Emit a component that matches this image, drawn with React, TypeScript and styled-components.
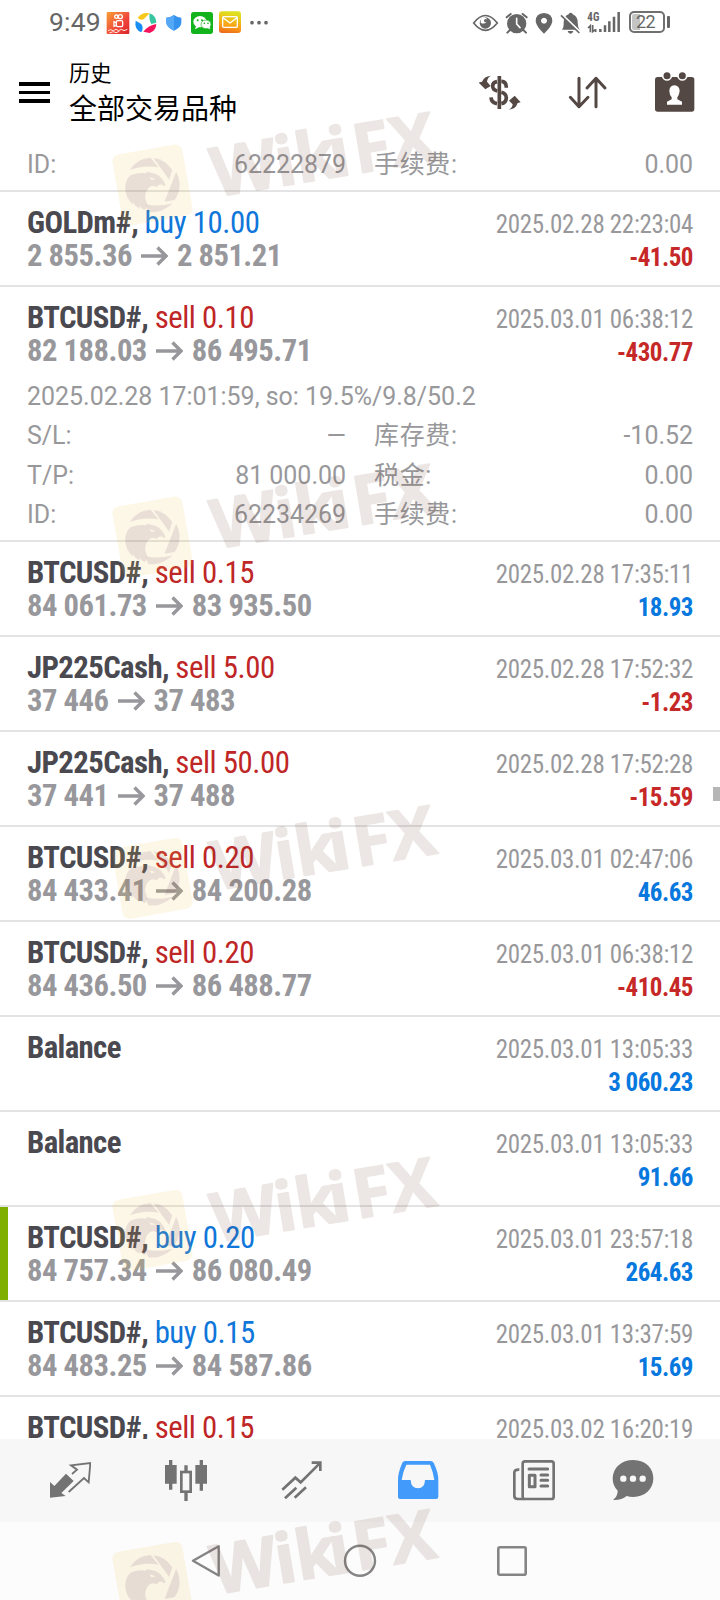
import React from 'react';
import styled, { createGlobalStyle } from 'styled-components';

const GlobalStyle = createGlobalStyle`
  * { box-sizing: border-box; }
  body { margin: 0; background: #fff; font-family: Roboto, 'Noto Sans CJK SC', sans-serif; }
`;

const Screen = styled.main`
  position: relative;
  display: flex;
  flex-direction: column;
  width: 720px;
  height: 1600px;
  overflow: hidden;
  background: #fff;
`;

const Icon = styled.svg`
  display: block;
  flex: none;
`;

/* ---------- status bar ---------- */

const StatusBar = styled.div`
  display: flex;
  justify-content: space-between;
  height: 46px;
  padding: 11px 50px 0 49px;
  color: #666;
`;

const StatusGroup = styled.div<{ $gap: number }>`
  display: flex;
  gap: ${(p) => p.$gap}px;
  height: 24px;
`;

const Clock = styled.span`
  width: 53px;
  font-size: 26.5px;
  line-height: 22px;
  letter-spacing: 0.2px;
`;

const BatteryBox = styled.div`
  display: flex;
  align-items: center;
  gap: 2px;
  margin-left: 4px;
  height: 22px;
  &::after {
    content: '';
    width: 3px;
    height: 12px;
    border-radius: 1px;
    background: #666;
  }
`;

const BatteryLevel = styled.span`
  width: 36px;
  height: 22px;
  border: 2px solid #707070;
  border-radius: 5px;
  box-shadow: inset 0 0 0 1px #fff;
  background: linear-gradient(to right, #c4c4c4 9px, transparent 9px);
  font-size: 18px;
  line-height: 18px;
  letter-spacing: -0.6px;
  text-align: center;
  padding-right: 3px;
`;

/* ---------- header ---------- */

const Header = styled.header`
  display: flex;
  flex: none;
  height: 98px;
  padding: 0 24px 0 19px;
`;

const MenuButton = styled.div`
  display: flex;
  flex-direction: column;
  gap: 5px;
  width: 50px;
  padding-top: 36px;
`;

const MenuBar = styled.span`
  width: 31px;
  height: 3.6px;
  background: #000;
`;

const Titles = styled.div`
  flex: 1;
  padding-top: 12px;
  color: #000;
  font-family: 'Noto Sans CJK SC', sans-serif;
`;

const Caption = styled.div`
  font-size: 21.3px;
  line-height: 28px;
`;

const Title = styled.div`
  font-size: 28px;
  line-height: 42px;
`;

const Actions = styled.div`
  display: flex;
  gap: 45.5px;
  padding-top: 25px;
`;

/* ---------- history list ---------- */

const List = styled.section`
  position: relative;
  flex: none;
  height: 1295px;
  overflow: hidden;
`;

const ScrollThumb = styled.div`
  position: absolute;
  right: 0;
  top: 643px;
  width: 7px;
  height: 14px;
  background: #b6b6b6;
`;

const Item = styled.article<{ $marked?: boolean }>`
  position: relative;
  border-bottom: 2px solid #e3e3e3;
  padding: 0 27px;
  ${(p) =>
    p.$marked &&
    `&::before {
      content: '';
      position: absolute;
      left: 0;
      top: 0;
      bottom: 0;
      width: 8px;
      background: #7faf00;
    }`}
`;

const Summary = styled.div`
  display: flex;
  justify-content: space-between;
  height: 93px;
  font-stretch: 75%;
`;

const Deal = styled.div`
  padding-top: 14px;
  line-height: 33px;
`;

const DealLine = styled.div`
  white-space: pre;
  color: #4a4950;
  font-weight: 660;
  font-size: 30.8px;
  letter-spacing: -0.62px;
`;

type Tone = 'blue' | 'red';

const Side = styled.span<{ $tone: Tone }>`
  font-weight: 400;
  letter-spacing: -0.45px;
  color: ${(p) => (p.$tone === 'blue' ? '#0f76da' : '#bf2626')};
`;

const Prices = styled.div`
  display: flex;
  align-items: center;
  gap: 9.5px;
  height: 33px;
  font-weight: 700;
  font-size: 30.6px;
  letter-spacing: -0.48px;
  color: #98989c;
  span:last-child { margin-left: -1px; }
`;

const Result = styled.div`
  padding-top: 16px;
  font-size: 25px;
  line-height: 33px;
  text-align: right;
`;

const Time = styled.div`
  color: #98989b;
  letter-spacing: -0.32px;
`;

const Profit = styled.div<{ $tone: Tone }>`
  font-weight: 700;
  font-size: 25px;
  letter-spacing: -0.5px;
  color: ${(p) => (p.$tone === 'blue' ? '#0878de' : '#c62828')};
`;

const Details = styled.div<{ $first?: boolean }>`
  display: grid;
  grid-template-columns: 319px 319px;
  column-gap: 28px;
  grid-auto-rows: 39.6px;
  height: ${(p) => (p.$first ? 46 : 164)}px;
  margin-top: ${(p) => (p.$first ? 0 : -4)}px;
  padding-top: ${(p) => (p.$first ? 1 : 0.6)}px;
  font-size: 24.95px;
  line-height: 39.6px;
  color: #98989b;
`;

const Comment = styled.div`
  grid-column: 1 / -1;
`;

const Field = styled.div`
  display: flex;
  justify-content: space-between;
`;

const FieldLabel = styled.span`
  &:lang(zh) { letter-spacing: 0.7px; }
`;

/* ---------- bottom bars ---------- */

const TabBar = styled.nav`
  display: flex;
  flex: none;
  gap: 74px;
  height: 83px;
  padding: 20px 0 0 49px;
  background: #f7f7f7;
  svg:last-child { margin-left: -17px; }
`;

const SystemBar = styled.div`
  display: flex;
  flex: 1;
  align-items: center;
  gap: 118.5px;
  padding-left: 190px;
  background: #fcfcfc;
`;

const WatermarkLayer = styled.svg`
  position: absolute;
  left: 0;
  top: 0;
  pointer-events: none;
`;

/* Artwork is drawn on a grid three times finer than the screen. */
const Art = ({ box, children }: { box: [number, number, number, number]; children: React.ReactNode }) => (
  <Icon width={box[2] / 3} height={box[3] / 3} viewBox={box.join(' ')} fill="none">
    {children}
  </Icon>
);

const Arrow = () => (
  <Icon width="27" height="22" viewBox="0 0 27 22" fill="none" stroke="#98989c" strokeWidth="3.4">
    <path d="M0 11H24.500M16.500 2.500l8.500 8.500L16.500 19.500" />
  </Icon>
);

type Row = {
  name: string;
  side?: string;
  tone?: Tone;
  from?: string;
  to?: string;
  time: string;
  profit: string;
  marked?: boolean;
  open?: boolean;
};

const rows: Row[] = [
  { name: 'GOLDm#', side: 'buy 10.00', tone: 'blue', from: '2 855.36', to: '2 851.21', time: '2025.02.28 22:23:04', profit: '-41.50' },
  { name: 'BTCUSD#', side: 'sell 0.10', tone: 'red', from: '82 188.03', to: '86 495.71', time: '2025.03.01 06:38:12', profit: '-430.77', open: true },
  { name: 'BTCUSD#', side: 'sell 0.15', tone: 'red', from: '84 061.73', to: '83 935.50', time: '2025.02.28 17:35:11', profit: '18.93' },
  { name: 'JP225Cash', side: 'sell 5.00', tone: 'red', from: '37 446', to: '37 483', time: '2025.02.28 17:52:32', profit: '-1.23' },
  { name: 'JP225Cash', side: 'sell 50.00', tone: 'red', from: '37 441', to: '37 488', time: '2025.02.28 17:52:28', profit: '-15.59' },
  { name: 'BTCUSD#', side: 'sell 0.20', tone: 'red', from: '84 433.41', to: '84 200.28', time: '2025.03.01 02:47:06', profit: '46.63' },
  { name: 'BTCUSD#', side: 'sell 0.20', tone: 'red', from: '84 436.50', to: '86 488.77', time: '2025.03.01 06:38:12', profit: '-410.45' },
  { name: 'Balance', time: '2025.03.01 13:05:33', profit: '3 060.23' },
  { name: 'Balance', time: '2025.03.01 13:05:33', profit: '91.66' },
  { name: 'BTCUSD#', side: 'buy 0.20', tone: 'blue', from: '84 757.34', to: '86 080.49', time: '2025.03.01 23:57:18', profit: '264.63', marked: true },
  { name: 'BTCUSD#', side: 'buy 0.15', tone: 'blue', from: '84 483.25', to: '84 587.86', time: '2025.03.01 13:37:59', profit: '15.69' },
  { name: 'BTCUSD#', side: 'sell 0.15', tone: 'red', time: '2025.03.02 16:20:19', profit: '' },
];

const Pair = ({ label, value, lang }: { label: string; value: string; lang?: string }) => (
  <Field>
    <FieldLabel lang={lang}>{label}</FieldLabel>
    <span>{value}</span>
  </Field>
);

const HistoryItem = ({ row }: { row: Row }) => (
  <Item $marked={row.marked}>
    <Summary>
      <Deal>
        <DealLine>
          {row.name}
          {row.side && ', '}
          {row.side && <Side $tone={row.tone!}>{row.side}</Side>}
        </DealLine>
        {row.from && (
          <Prices>
            <span>{row.from}</span>
            <Arrow />
            <span>{row.to}</span>
          </Prices>
        )}
      </Deal>
      <Result>
        <Time>{row.time}</Time>
        {row.profit && <Profit $tone={row.profit.startsWith('-') ? 'red' : 'blue'}>{row.profit}</Profit>}
      </Result>
    </Summary>
    {row.open && (
      <Details>
        <Comment>2025.02.28 17:01:59, so: 19.5%/9.8/50.2</Comment>
        <Pair label="S/L:" value="—" />
        <Pair label="库存费:" value="-10.52" lang="zh-CN" />
        <Pair label="T/P:" value="81 000.00" />
        <Pair label="税金:" value="0.00" lang="zh-CN" />
        <Pair label="ID:" value="62234269" />
        <Pair label="手续费:" value="0.00" lang="zh-CN" />
      </Details>
    )}
  </Item>
);

const Watermark = ({ top }: { top: number }) => (
  <g transform={`translate(0 ${top})`}>
    <g transform="translate(152.5 41)">
      <rect x="-35.5" y="-36" width="71" height="72" rx="7" transform="rotate(-10)" fill="#f2c34b" fillOpacity=".13" />
      <g transform="scale(.3333) translate(-132 -153)" fill="#6d3f60" fillOpacity=".13">
        <path d="M64 108Q85 73 126 71L150 100Q104 92 64 108Z" />
        <path d="M135 72Q170 76 191 108L182 137Z" />
        <path d="M203 113Q226 158 198 198L168 203Z" />
        <path d="M192 208Q158 240 120 234Q114 226 112 210Q145 220 192 208Z" />
        <path d="M50 160Q52 136 66 124Q90 114 112 118L116 113L140 119Q162 127 172 155L165 155Q160 150 151 152L144 159Q130 150 118 164Q104 184 114 204Q118 220 108 228Q96 222 92 214L94 224Q78 215 72 204L73 212Q50 190 50 160Z" />
      </g>
      <path d="M-3 -8l6 2l-4 1z" fill="#fdf6e4" />
    </g>
    <g transform="translate(228 51.2) rotate(-9.5)">
      <text
        x="-13 51.5 72 106 130.5 168"
        y="0"
        fontFamily="Open Sans"
        fontWeight="700"
        fontSize="68.5"
        fill="#6d3f2f"
        stroke="#6d3f2f"
        strokeWidth="1.5"
        strokeLinejoin="round"
        opacity=".125"
      >
        WikiFX
      </text>
    </g>
  </g>
);

export default function App() {
  return (
    <Screen>
      <GlobalStyle />
      <StatusBar>
        <StatusGroup $gap={4}>
          <Clock>9:49</Clock>
          <Art box={[318, 33, 72, 72]}>
            <defs>
              <linearGradient id="kw" x1="0" y1="0" x2="1" y2="1">
                <stop offset="0" stopColor="#f8a034" />
                <stop offset=".6" stopColor="#f0453a" />
                <stop offset="1" stopColor="#d8262c" />
              </linearGradient>
            </defs>
            <rect x="320" y="36" width="68" height="66" rx="3" fill="url(#kw)" />
            <g stroke="#fff" strokeWidth="4">
              <circle cx="349" cy="50" r="5" />
              <circle cx="361" cy="50" r="6" />
              <rect x="349" y="62" width="19" height="18" rx="4" />
              <path d="M349 68l-7-3v14l7-3" />
            </g>
            <path d="M324 92l8-3 8 3 8-4 8 4 8-4 8 4 10-4M328 99l12-4 8 3 10-4" stroke="#ffe9dc" strokeWidth="3" />
          </Art>
          <Art box={[402, 33, 72, 72]}>
            <path d="M413 53Q426 35 449 40L431 58Q420 62 413 53Z" fill="#f9c81e" />
            <path d="M449 40Q469 48 469 68L454 72Q446 58 449 40Z" fill="#38c6a0" />
            <path d="M469 72Q468 92 449 99L430 95Q445 76 469 72Z" fill="#f5145c" />
            <path d="M407 62Q402 88 424 97Q432 84 424 72Z" fill="#188ef5" />
          </Art>
          <Art box={[486, 33, 72, 72]}>
            <path d="M522 45Q533 53 544 53V69Q543 83 522 92Q501 83 499 69V53Q511 53 522 45Z" fill="#3593ef" />
            <path d="M522 45Q511 53 499 53V69Q501 83 522 92Z" fill="#55a8f5" />
          </Art>
          <Art box={[570, 33, 72, 72]}>
            <rect x="573" y="36" width="66" height="66" rx="8" fill="#12b31c" />
            <ellipse cx="600" cy="65" rx="20" ry="17" fill="#fff" />
            <path d="M588 78l-3 10 12-6" fill="#fff" />
            <ellipse cx="618" cy="73" rx="15" ry="13" fill="#fff" stroke="#12b31c" strokeWidth="2" />
            <path d="M622 84l9 4-3-10" fill="#fff" />
            <g fill="#12b31c">
              <circle cx="593" cy="61" r="3" />
              <circle cx="606" cy="61" r="3" />
              <circle cx="613" cy="70" r="2.5" />
              <circle cx="624" cy="70" r="2.5" />
            </g>
          </Art>
          <Art box={[654, 33, 72, 72]}>
            <defs>
              <linearGradient id="ml" x1="0.2" y1="0" x2="0" y2="1">
                <stop offset="0" stopColor="#dfe01f" />
                <stop offset=".6" stopColor="#fba018" />
                <stop offset="1" stopColor="#e8601c" />
              </linearGradient>
            </defs>
            <rect x="657" y="34" width="66" height="65" rx="9" fill="url(#ml)" />
            <rect x="668" y="50" width="44" height="32" rx="3" stroke="#fff" strokeWidth="4" />
            <path d="M669 53l21 16 21-16" stroke="#fff" strokeWidth="4" />
          </Art>
          <Art box={[738, 33, 66, 72]}>
            <g fill="#666">
              <circle cx="756" cy="68" r="5.500" />
              <circle cx="777" cy="68" r="5.500" />
              <circle cx="798" cy="68" r="5.500" />
            </g>
          </Art>
        </StatusGroup>
        <StatusGroup $gap={4}>
          <Art box={[336, 33, 84, 72]}>
            <path d="M341 69Q376 24 412 69Q376 113 341 69Z" stroke="#666" strokeWidth="5" />
            <circle cx="376" cy="69" r="17" fill="#666" />
            <path d="M362 60Q364 52 374 52Q384 56 380 66Q372 74 362 68Z" fill="#fff" />
            <circle cx="377" cy="62" r="5" fill="#666" />
          </Art>
          <Art box={[432, 33, 75, 72]}>
            <circle cx="470" cy="71" r="29" fill="#666" />
            <path d="M450 90l-8 8M490 90l8 8M440 52l12-10M500 52l-12-10" stroke="#666" strokeWidth="6" strokeLinecap="round" />
            <path d="M470 55v17l10 11" stroke="#fff" strokeWidth="5" strokeLinecap="round" />
          </Art>
          <Art box={[519, 33, 66, 72]}>
            <path fillRule="evenodd" d="M552 39Q577 40 577 64Q575 80 552 101Q529 80 527 64Q527 40 552 39ZM552 53a9 9 0 1 0 .1 0Z" fill="#666" />
          </Art>
          <Art box={[597, 33, 69, 72]}>
            <path d="M632 38Q638 38 638 43Q653 48 653 68Q653 80 659 89H606Q612 82 611 66Q612 48 626 43Q626 38 632 38ZM623 93h17q-2 8-8.500 8t-8.500-8Z" fill="#666" />
            <path d="M604 42l58 56" stroke="#fff" strokeWidth="7" />
            <path d="M603 46l55 53" stroke="#666" strokeWidth="5" />
          </Art>
          <Art box={[678, 33, 105, 72]}>
            <text x="682" y="63" fontFamily="Roboto" fontStretch="75%" fontWeight="700" fontSize="37" textLength="36" lengthAdjust="spacingAndGlyphs" fill="#666">
              4G
            </text>
            <path d="M684 84l7-7v20M698 75v20l9-7M707 88v8" stroke="#666" strokeWidth="5" />
            <path d="M721 96v-9M735 96v-20M748 96v-32M762 96v-46M776 96v-60" stroke="#666" strokeWidth="7.500" />
          </Art>
          <BatteryBox>
            <BatteryLevel>22</BatteryLevel>
          </BatteryBox>
        </StatusGroup>
      </StatusBar>

      <Header>
        <MenuButton>
          <MenuBar />
          <MenuBar />
          <MenuBar />
        </MenuButton>
        <Titles>
          <Caption>历史</Caption>
          <Title>全部交易品种</Title>
        </Titles>
        <Actions>
          <Art box={[357, 213, 126, 126]}>
            <g stroke="#544844" strokeWidth="11">
              <path d="M418 228V327" />
              <path d="M439 263Q439 244 424 244M411 245Q398 247 398 258Q398 270 412 273M424 277Q439 281 439 294Q438 308 424 311M411 311Q394 308 393 292" />
            </g>
            <path d="M392 227Q382 233 381 245L392 258L376 268L356 248L366 245Q372 229 392 227Z" fill="#544844" />
            <path d="M446 329Q457 325 458 313L447 302L464 287L482 307L473 309Q467 328 446 329Z" fill="#544844" />
          </Art>
          <Art box={[621, 213, 126, 126]}>
            <path d="M657 235V320M631 292L657 320L684 292M708 320V235M681 264L708 235L735 264" stroke="#544844" strokeWidth="9" strokeLinecap="round" strokeLinejoin="round" />
          </Art>
          <Art box={[882, 213, 126, 126]}>
            <rect x="885" y="231" width="118" height="104" rx="8" fill="#544844" />
            <g fill="#544844" stroke="#fff" strokeWidth="5">
              <circle cx="921" cy="227" r="13" />
              <circle cx="967" cy="227" r="13" />
            </g>
            <path d="M943 256Q959 257 959 274Q957 287 952 292V298L966 305V314H921V305L935 298V292Q929 287 928 274Q928 257 943 256Z" fill="#fff" />
          </Art>
        </Actions>
      </Header>

      <List>
        <Item>
          <Details $first>
            <Pair label="ID:" value="62222879" />
            <Pair label="手续费:" value="0.00" lang="zh-CN" />
          </Details>
        </Item>
        {rows.map((row, i) => (
          <HistoryItem key={i} row={row} />
        ))}
        <ScrollThumb />
      </List>

      <TabBar>
        <Art box={[147, 87, 126, 126]}>
          <path d="M150 156L163 168L198 131L221 153L184 189L197 198L150 203Z" fill="#737373" />
          <path d="M216 132L231 119L213 106L271 99L266 157L252 144L206 186" stroke="#737373" strokeWidth="5.500" />
        </Art>
        <Art box={[495, 87, 126, 126]}>
          <path d="M512 90V179M604 90V182M558 106V126M558 186V213" stroke="#737373" strokeWidth="10" />
          <path d="M495 105H530V161H495ZM586 105H621V161H586Z" fill="#737373" />
          <rect x="544" y="126" width="28" height="59" stroke="#737373" strokeWidth="8" />
        </Art>
        <Art box={[843, 87, 126, 126]}>
          <path d="M847 179L886 143L902 157L959 100M935 98H961V123M855 205L889 173M884 203L918 172" stroke="#737373" strokeWidth="8" />
        </Art>
        <Art box={[111, 87, 126, 126]}>
          <path fillRule="evenodd" d="M135 93H212Q218 93 221 98Q236 130 235 152V200Q235 207 228 207H120Q114 207 114 200V152Q113 130 127 98Q130 93 135 93ZM139 104Q129 124 125 150H152Q153 175 174 175Q194 175 195 150H223Q219 124 210 104Z" fill="#429bfb" />
        </Art>
        <Art box={[459, 87, 126, 126]}>
          <rect x="488" y="94" width="93" height="113" rx="7" stroke="#737373" strokeWidth="8" />
          <path d="M478 119Q463 118 463 128V198Q463 207 474 207H492" stroke="#737373" strokeWidth="8" />
          <path d="M507 117H563M543 135H563M543 151H563M543 168H563" stroke="#737373" strokeWidth="9" strokeLinecap="round" />
          <rect x="508" y="136" width="17" height="34" stroke="#737373" strokeWidth="9" strokeLinejoin="round" />
        </Art>
        <Art box={[756, 87, 126, 126]}>
          <path d="M820 90C858 90 880 115 880 145C880 178 854 201 820 201Q809 201 800 198Q785 211 759 210Q774 197 773 182Q758 168 758 145C759 113 784 90 820 90Z" fill="#737373" />
          <g fill="#f7f7f7">
            <circle cx="790" cy="146" r="9.500" />
            <circle cx="819" cy="146" r="9.500" />
            <circle cx="848" cy="146" r="9.500" />
          </g>
        </Art>
      </TabBar>

      <SystemBar>
        <Icon width="34" height="34" viewBox="0 0 34 34" fill="none" stroke="#858585" strokeWidth="2.4" strokeLinejoin="round">
          <path d="M3 16.700L28.700 2.200V31.500Z" />
        </Icon>
        <Icon width="34" height="34" viewBox="0 0 34 34" fill="none" stroke="#858585" strokeWidth="2.4">
          <circle cx="17" cy="16.700" r="15" />
        </Icon>
        <Icon width="34" height="34" viewBox="0 0 34 34" fill="none" stroke="#858585" strokeWidth="2.6">
          <rect x="3.300" y="3.300" width="27.400" height="27.400" rx="1.500" />
        </Icon>
      </SystemBar>

      <WatermarkLayer width="720" height="1600" viewBox="0 0 720 1600" aria-hidden="true">
        {[144, 496, 837.3, 1189.3, 1541.3].map((top) => (
          <Watermark key={top} top={top} />
        ))}
      </WatermarkLayer>
    </Screen>
  );
}
